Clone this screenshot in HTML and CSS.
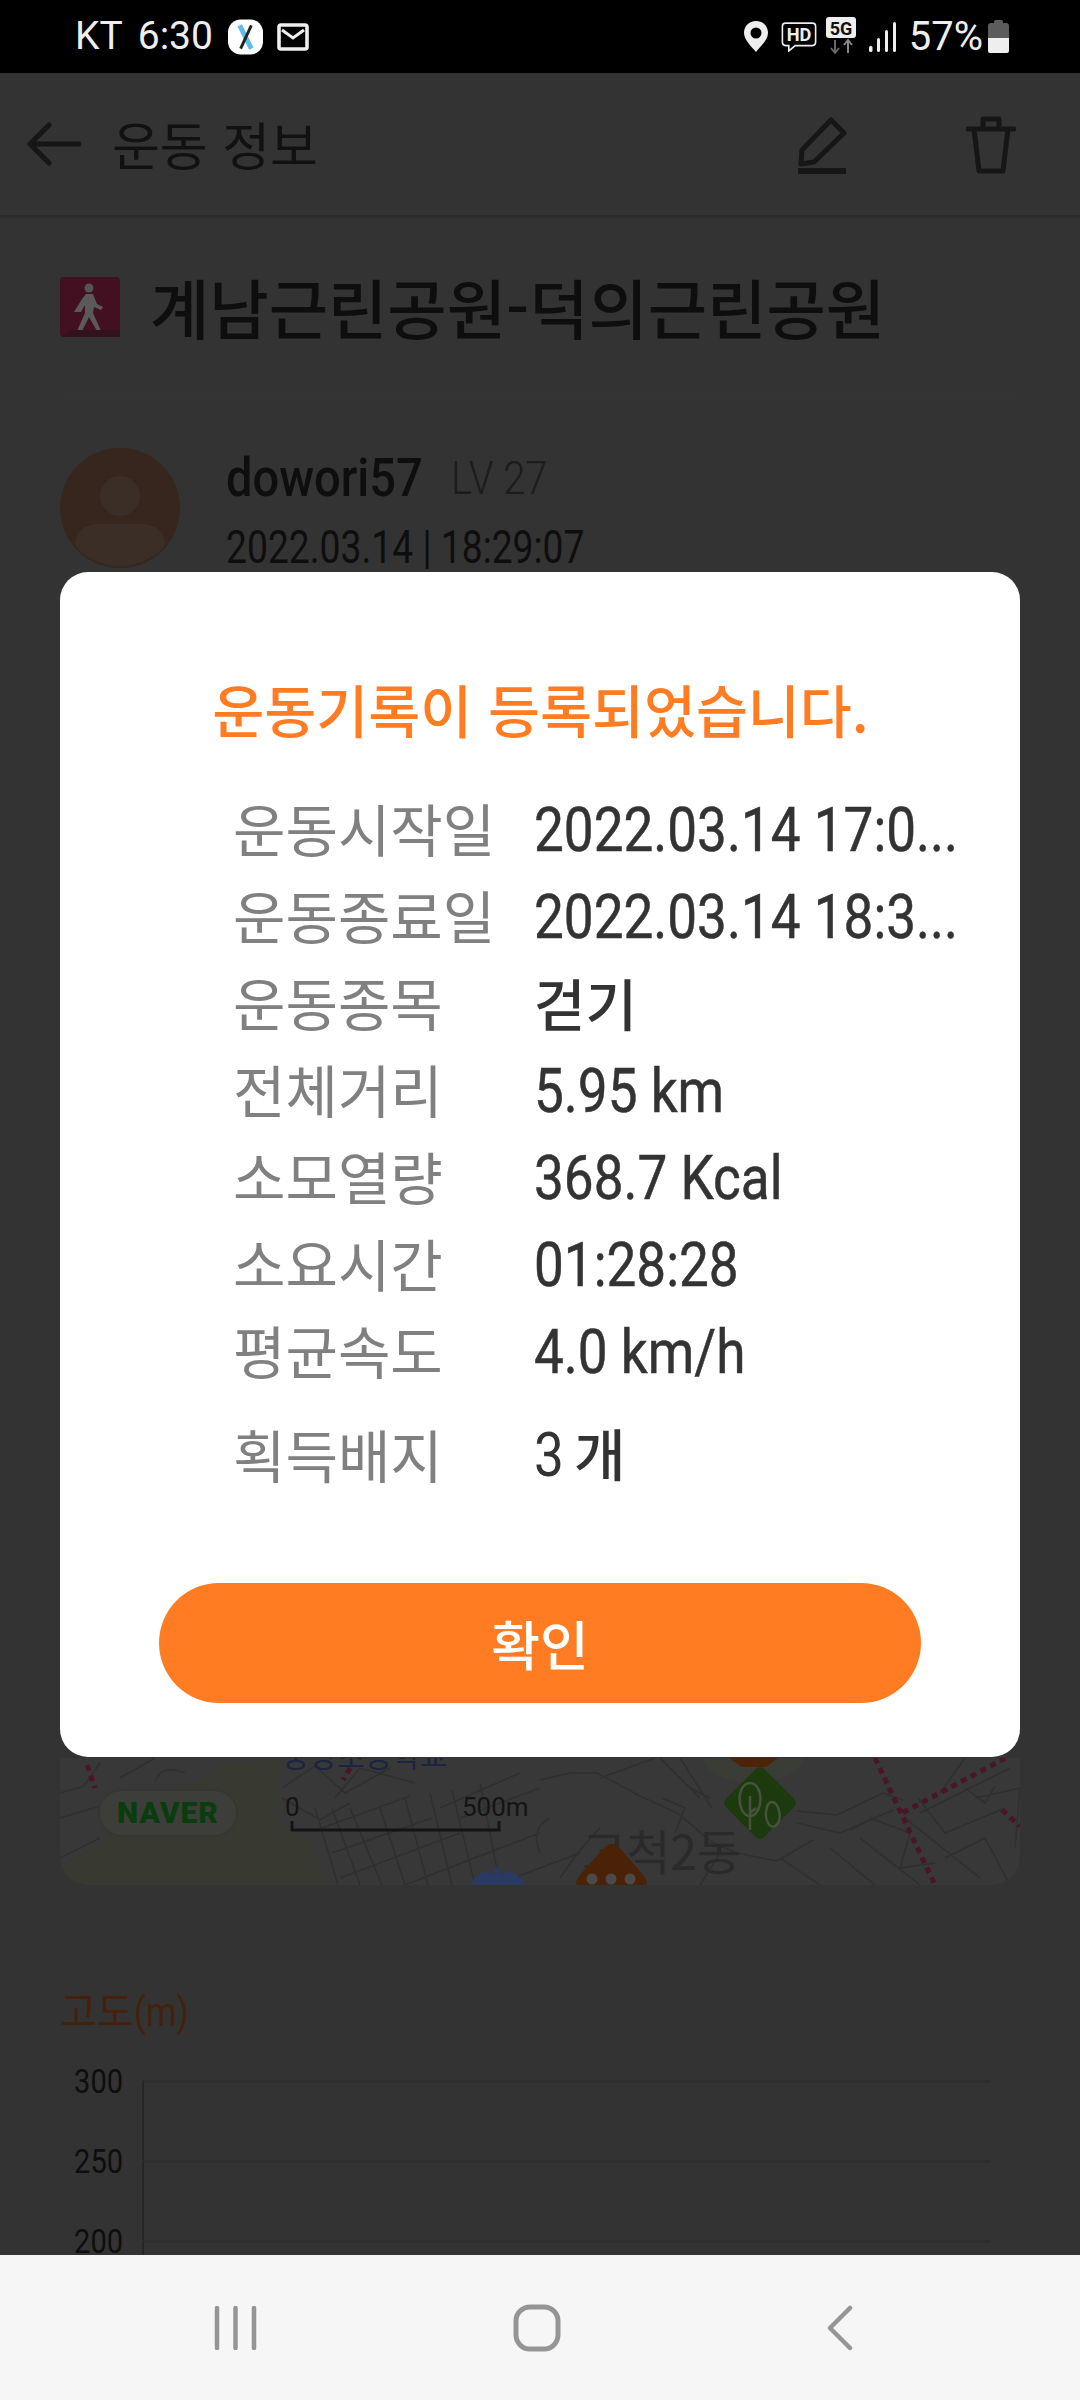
FILE: index.html
```html
<!DOCTYPE html>
<html lang="ko">
<head>
<meta charset="utf-8">
<title>운동 정보</title>
<link rel="stylesheet" href="styles.css">
</head>
<body>
<div class="screen">
  <header class="status">
    <div class="status-left">
      <span class="st-text">KT</span>
      <span class="st-text st-time">6:30</span>
      <svg class="ic-x" viewBox="0 0 36 36"><rect width="36" height="36" rx="13" fill="#fff"/><path d="M12 6 L24 30" stroke="#5bbde8" stroke-width="5"/><path d="M24 6 L13 30" stroke="#222" stroke-width="3"/></svg>
      <svg class="ic-mail" viewBox="0 0 32 28"><rect x="2" y="2" width="28" height="24" rx="2" fill="none" stroke="#eee" stroke-width="3.6"/><path d="M5 7 L16 15 L27 7" fill="none" stroke="#eee" stroke-width="3"/></svg>
    </div>
    <div class="status-right">
      <svg class="ic-pin" viewBox="0 0 24 31"><path fill-rule="evenodd" d="M12 0 C5 0 0 5 0 12 C0 19 8 26 12 31 C16 26 24 19 24 12 C24 5 19 0 12 0 Z M12 6.5 A5.5 5.5 0 1 1 12 17.5 A5.5 5.5 0 1 1 12 6.5 Z" fill="#eee"/></svg>
      <svg class="ic-hd" viewBox="0 0 33 28"><path d="M4 1 H29 Q32 1 32 4 V19 Q32 22 29 22 H13 L7 27 V22 H4 Q1 22 1 19 V4 Q1 1 4 1 Z" fill="none" stroke="#eee" stroke-width="1.5"/><text x="16.500" y="18" class="hd-text">HD</text></svg>
      <svg class="ic-5g" viewBox="0 0 30 38"><rect width="30" height="21" rx="3" fill="#eee"/><text x="15" y="17.500" class="g5-text">5G</text><path d="M9 23 V36 M5 31 L9 36 L13 31" fill="none" stroke="#666" stroke-width="2"/><path d="M22 36 V23 M18 28 L22 23 L26 28" fill="none" stroke="#888" stroke-width="2"/></svg>
      <svg class="ic-signal" viewBox="0 0 27 30"><rect x="0" y="24" width="3.500" height="6" rx="1.500" fill="#eee"/><rect x="8" y="16" width="3" height="14" rx="1.500" fill="#eee"/><rect x="16" y="8" width="3" height="22" rx="1.500" fill="#eee"/><rect x="24" y="0" width="3" height="30" rx="1.500" fill="#eee"/></svg>
      <span class="st-text st-pct">57%</span>
      <svg class="ic-batt" viewBox="0 0 21 33"><path d="M7 0 H14 Q15 0 15 3 H18 Q21 3 21 6 V18 H0 V6 Q0 3 3 3 H6 Q6 0 7 0 Z" fill="#5c5c5c"/><path d="M0 18 H21 V31 Q21 33 19 33 H2 Q0 33 0 31 Z" fill="#eee"/></svg>
    </div>
  </header>

  <main class="page">
    <div class="appbar">
      <svg class="ic-back" viewBox="0 0 54 44"><path d="M52 22 H4 M22 3 L3 22 L22 41" fill="none" stroke="#161616" stroke-width="5" stroke-linecap="round" stroke-linejoin="round"/></svg>
      <h1 class="appbar-title">운동 정보</h1>
      <svg class="ic-edit" viewBox="0 0 50 58"><path d="M34 3 L47 16 L17 45 L4 47 L5 33 Z" fill="none" stroke="#161616" stroke-width="5" stroke-linejoin="round"/><rect x="1" y="51" width="48" height="6" fill="#161616"/></svg>
      <svg class="ic-trash" viewBox="0 0 50 58"><path d="M2 13 H48 M8 13 L13 55 H37 L42 13 M17 13 V3 H33 V13" fill="none" stroke="#161616" stroke-width="5" stroke-linecap="round" stroke-linejoin="round"/></svg>
    </div>

    <div class="title-row">
      <svg class="ic-walk" viewBox="0 0 60 60"><rect width="60" height="60" rx="4" fill="#421021"/><circle cx="29" cy="11" r="4.500" fill="#555"/><path d="M26 17 H33 L37 27 L43 30 L41 33 L34 30 L33 36 L41 54 H37 L29 40 L22 54 H17 L25 36 L25 28 L21 35 L14 35 L22 22 Z" fill="#5a5a5a"/><path d="M2 60 L10 53 H60 V60 Z" fill="#33111d"/></svg>
      <h2 class="course">계남근린공원-덕의근린공원</h2>
    </div>
    <div class="divider"></div>

    <div class="user-row">
      <svg class="avatar" viewBox="0 0 120 120"><circle cx="60" cy="60" r="60" fill="#36261e"/><ellipse cx="60" cy="48" rx="20" ry="20" fill="#3a2e27"/><path d="M15 98 Q16 76 40 76 H80 Q104 76 105 98 A60 60 0 0 1 15 98 Z" fill="#3a2e27"/></svg>
      <div class="user-info">
        <div class="user-line"><span class="cond user-name">dowori57</span><span class="cond user-lv">LV 27</span></div>
        <div class="cond user-date">2022.03.14 | 18:29:07</div>
      </div>
    </div>

    <section class="map">
      <svg class="map-svg" viewBox="0 0 960 127">
        <path d="M3 107 L43 83 L167 5 L220 2 L217 63 L252 85 L267 127 H18 Q8 125 3 112 Z" fill="#383a31"/>
        <path id="streets" class="roads" d="M0 35 L24 28 L40 5 M0 60 L40 48 M60 20 L95 0 M95 25 Q100 5 125 15 M40 80 L0 100
          M222 30 L255 8 L285 35 L330 10 M222 40 L260 62 L290 45 M275 40 L300 10 L355 25
          M278 127 L255 50 M300 127 L272 50 M322 127 L290 50 M345 127 L320 50 M368 127 L345 40 M392 127 L370 35 M415 127 L392 32 M440 127 L420 25
          M262 70 L350 38 M272 95 L372 60 M280 120 L400 75 M345 127 L440 90 M380 50 L460 15 M400 60 L480 30 M415 100 L480 75 M440 125 L520 95
          M480 22 L510 15 L537 15 L580 38 L617 55 L653 85 L677 95 L717 103 L753 82
          M540 20 L595 0 M600 0 L640 40 M652 50 L620 0 M602 40 L625 50 L615 75 M630 30 L650 40 M660 95 L640 127
          M737 53 L777 57 L823 35 L843 42 M737 65 L780 75 L833 52 M790 72 L810 62 M720 100 L760 127 M770 90 L815 127 M800 80 L860 127 M810 60 L850 75 L840 110 L875 105
          M845 60 L920 120 M858 40 L885 75 L945 50 M860 55 L950 10 M880 35 L905 0 M915 40 L960 30 L955 90 M885 100 L925 80 L950 127 M905 30 L925 45 L935 28
          M500 120 Q520 90 540 70 M490 60 Q470 70 480 95"/>
        <g class="rail">
          <path d="M27 7 L35 30"/>
          <path d="M290 10 L283 22"/>
          <path d="M815 0 L875 127"/>
          <path d="M955 -5 L842 55"/>
          <path d="M942 52 L960 68"/>
        </g>
        <text x="222" y="9" class="school">중앙초등학교</text>
        <rect x="39" y="32" width="138" height="46" rx="23" fill="#3d3e39" stroke="#363730" stroke-width="2"/>
        <text x="108" y="65" class="naver">NAVER</text>
        <text x="225" y="58" class="scale-t">0</text>
        <text x="402" y="58" class="scale-t">500m</text>
        <path d="M232 63 V72 H439 V63" fill="none" stroke="#141414" stroke-width="3"/>
        <ellipse cx="693" cy="0" rx="50" ry="25" fill="#3a3d36"/>
        <path d="M662 -5 H725 L706 9 H682 Z" fill="#4e2307"/>
        <rect x="673" y="18" width="54" height="54" rx="6" transform="rotate(45 700 45)" fill="#1c3a0d"/>
        <path d="M690 25 C680 25 677 42 682 52 C686 60 694 60 698 52 C703 42 700 25 690 25 Z M690 38 V72 M690 55 L696 50 M712 44 C706 44 704 58 708 65 C711 70 715 70 718 65 C722 58 718 44 712 44 Z" fill="none" stroke="#47523f" stroke-width="2.500"/>
        <text x="522" y="112" class="dong">고척2동</text>
        <path d="M412 127 C412 118 425 113 428 113 L431 117 L436 108 L442 117 L446 113 C452 114 464 118 464 127 Z" fill="#2b3a63"/>
        <path d="M544 90 Q552 82 560 90 L584 118 Q590 127 584 127 H519 Q513 127 519 118 Z" fill="#4a2208"/>
        <circle cx="532" cy="121" r="5.500" fill="#4a4a4a"/><circle cx="551" cy="121" r="5.500" fill="#4a4a4a"/><circle cx="570" cy="121" r="5.500" fill="#4a4a4a"/>
      </svg>
    </section>

    <section class="chart">
      <h3 class="chart-title">고도<span class="cond">(m)</span></h3>
      <div class="chart-plot">
        <div class="tick"><span class="cond tick-l">300</span><i class="tick-line"></i></div>
        <div class="tick"><span class="cond tick-l">250</span><i class="tick-line"></i></div>
        <div class="tick"><span class="cond tick-l">200</span><i class="tick-line"></i></div>
      </div>
    </section>
  </main>

  <nav class="navbar">
    <svg class="nav-recent" viewBox="0 0 43 44"><path d="M3 2 V42 M21.500 2 V42 M40 2 V42" stroke="#959595" stroke-width="4.500" stroke-linecap="round"/></svg>
    <svg class="nav-home" viewBox="0 0 48 48"><rect x="3" y="3" width="42" height="42" rx="14" fill="none" stroke="#959595" stroke-width="5"/></svg>
    <svg class="nav-back" viewBox="0 0 27 46"><path d="M24 3 L4 23 L24 43" fill="none" stroke="#959595" stroke-width="4.500" stroke-linecap="round" stroke-linejoin="round"/></svg>
  </nav>

  <div class="modal">
    <h2 class="modal-title">운동기록이 등록되었습니다.</h2>
    <dl class="rows">
      <div class="row"><dt class="lab">운동시작일</dt><dd class="val"><span class="cond">2022.03.14 17:0...</span></dd></div>
      <div class="row"><dt class="lab">운동종료일</dt><dd class="val"><span class="cond">2022.03.14 18:3...</span></dd></div>
      <div class="row"><dt class="lab">운동종목</dt><dd class="val val-ko">걷기</dd></div>
      <div class="row"><dt class="lab">전체거리</dt><dd class="val"><span class="cond">5.95 km</span></dd></div>
      <div class="row"><dt class="lab">소모열량</dt><dd class="val"><span class="cond">368.7 Kcal</span></dd></div>
      <div class="row"><dt class="lab">소요시간</dt><dd class="val"><span class="cond">01:28:28</span></dd></div>
      <div class="row"><dt class="lab">평균속도</dt><dd class="val"><span class="cond">4.0 km/h</span></dd></div>
      <div class="row row-last"><dt class="lab">획득배지</dt><dd class="val val-ko"><span class="cond val-num">3</span>개</dd></div>
    </dl>
    <button class="ok">확인</button>
  </div>
</div>
</body>
</html>
```
FILE: styles.css
```css
* { box-sizing: border-box; }
html, body { margin: 0; padding: 0; }
body { font-family: "Noto Sans CJK KR", "Roboto", sans-serif; background: #333; }
h1, h2, h3, dl, dd, dt { margin: 0; padding: 0; font-weight: 400; }

.screen { position: relative; width: 1080px; height: 2400px; display: flex; flex-direction: column; overflow: hidden; background: #333; }

/* condensed latin text */
.cond { display: inline-block; font-family: "Roboto", sans-serif; transform: scaleX(.87); transform-origin: left center; white-space: nowrap; }

/* status bar */
.status { height: 73px; flex: none; background: #000; display: flex; justify-content: space-between; align-items: center; padding: 0 71px 0 75px; }
.status-left, .status-right { display: flex; align-items: center; }
.st-text { font-family: "Roboto", sans-serif; font-size: 39px; color: #eee; line-height: 73px; }
.st-time { margin-left: 15px; }
.ic-x { width: 35px; height: 36px; margin-left: 15px; }
.ic-mail { width: 32px; height: 28px; margin-left: 14px; }
.ic-pin { width: 24px; height: 31px; }
.ic-hd { width: 36px; height: 30px; margin-left: 13px; }
.hd-text { font-family: "Roboto", sans-serif; font-size: 17px; font-weight: 700; fill: #eee; text-anchor: middle; }
.ic-5g { width: 30px; height: 38px; margin-left: 9px; margin-top: 17px; align-self: flex-start; }
.g5-text { font-family: "Roboto", sans-serif; font-size: 18px; font-weight: 700; fill: #111; text-anchor: middle; }
.ic-signal { width: 27px; height: 30px; margin-left: 13px; }
.st-pct { margin-left: 13px; font-size: 40px; }
.ic-batt { width: 21px; height: 33px; margin-left: 5px; }

/* page */
.page { flex: 1; min-height: 0; overflow: hidden; display: flex; flex-direction: column; }
.appbar { height: 145px; flex: none; display: flex; align-items: center; padding: 0 64px 0 27px; border-bottom: 3px solid #2c2c2c; }
.ic-back { width: 54px; height: 44px; flex: none; }
.appbar-title { font-size: 52px; color: #111; margin-left: 31px; flex: 1; line-height: 1; }
.ic-edit { width: 50px; height: 58px; margin-right: 119px; margin-top: 4px; }
.ic-trash { width: 50px; height: 58px; margin-top: 2px; }

.title-row { display: flex; align-items: center; padding: 56px 60px 0; height: 121px; flex: none; }
.ic-walk { width: 60px; height: 60px; flex: none; }
.course { font-size: 64.500px; font-weight: 500; color: #0e0e0e; margin-left: 30px; line-height: 1; white-space: nowrap; }
.divider { height: 2px; margin: 56px 60px 0; background: #343434; flex: none; }

.user-row { display: flex; padding: 51px 60px 0; flex: none; height: 200px; }
.avatar { width: 120px; height: 120px; flex: none; }
.user-info { margin-left: 46px; }
.user-line { display: flex; align-items: center; height: 60px; }
.user-name { font-size: 54px; font-weight: 500; color: #0e0e0e; width: 225px; line-height: 60px; }
.user-lv { font-size: 46px; font-weight: 300; color: #1c1c1c; line-height: 60px; }
.user-date { display: block; font-size: 46px; color: #0e0e0e; line-height: 60px; margin-top: 9px; transform: scaleX(.81); }

.map { flex: none; margin: 1161px 60px 0; height: 127px; border-radius: 0 0 28px 28px; overflow: hidden; background: #383838; }
.map-svg { display: block; width: 960px; height: 127px; overflow: hidden; }
.roads { fill: none; stroke: #2f2f2f; stroke-width: 1.500; }
.rail path { fill: none; stroke: #4a1528; stroke-width: 5; stroke-dasharray: 6 5; }
.school { font-family: "Noto Sans CJK KR", sans-serif; font-size: 30px; fill: #1b2440; }
.naver { font-family: "Roboto", sans-serif; font-weight: 900; font-size: 30px; letter-spacing: 1px; fill: #0a3c10; text-anchor: middle; }
.scale-t { font-family: "Roboto", sans-serif; font-size: 26px; fill: #141414; }
.dong { font-family: "Noto Sans CJK KR", sans-serif; font-size: 48px; fill: #2a2a2a; }

.chart { padding: 0 90px 0 60px; margin-top: 99px; flex: 1; min-height: 0; }
.chart-title { font-size: 40px; color: #45200b; line-height: 50px; }
.chart-plot { margin-top: 3px; }
.tick { display: flex; align-items: center; height: 80px; }
.tick-l { font-size: 33px; line-height: 1; color: #0e0e0e; width: 82px; padding-left: 16px; transform: scaleX(.88); flex: none; }
.tick-line { display: block; flex: 1; height: 3px; background: #2e2e2e; }
.tick-line::before { content: ""; display: block; width: 2px; height: 80px; background: #262626; margin-top: 1px; }

/* nav bar */
.navbar { height: 145px; flex: none; background: #f6f6f6; display: grid; grid-template-columns: 235px 368px 236px; align-items: center; justify-items: center; padding: 0 0 0 118px; }
.nav-recent { width: 43px; height: 44px; }
.nav-home { width: 48px; height: 48px; }
.nav-back { width: 27px; height: 46px; }

/* modal */
.modal { position: absolute; left: 60px; top: 572px; width: 960px; height: 1185px; background: #fff; border-radius: 28px; padding: 96px 99px 0; display: flex; flex-direction: column; }
.modal-title { font-size: 56.500px; font-weight: 500; color: #ff7c23; text-align: center; line-height: 80px; white-space: nowrap; margin-left: 1px; }
.rows { margin-top: 36px; margin-left: 74px; margin-right: -75px; flex: 1; }
.row { display: flex; align-items: center; height: 87px; }
.row-last { margin-top: 17px; }
.lab { width: 301px; font-size: 57px; color: #808080; line-height: 87px; flex: none; white-space: nowrap; }
.val { font-size: 61px; color: #333; line-height: 87px; white-space: nowrap; -webkit-text-stroke: .5px #333; min-width: 0; }
.val-ko { font-size: 56px; font-weight: 500; -webkit-text-stroke: 0; }
.val-num { font-size: 61px; font-weight: 400; width: 40px; }
.ok { flex: none; height: 120px; width: 762px; border: 0; border-radius: 60px; background: #ff7c23; color: #fff; font-family: inherit; font-size: 53px; font-weight: 500; margin-bottom: 54px; padding: 0; }
```
